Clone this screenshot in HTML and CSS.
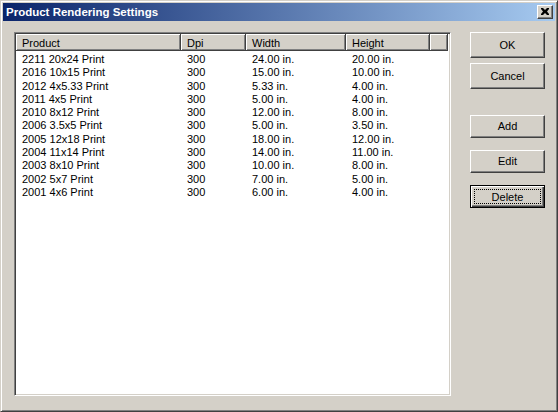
FILE: index.html
```html
<!DOCTYPE html>
<html>
<head>
<meta charset="utf-8">
<link rel="stylesheet" href="styles.css">
</head>
<body>
<div class="window">
  <div class="titlebar">
    <span class="title">Product Rendering Settings</span>
    <span class="close">
      <svg width="8" height="7" viewBox="0 0 8 7"><path d="M0 0h2l2 2 2-2h2v1l-2 2.5 2 2.5v1h-2l-2-2-2 2h-2v-1l2-2.5-2-2.5z" fill="#000"/></svg>
    </span>
  </div>
  <div class="client">
    <div class="listbox">
      <div class="header">
        <div class="hcell">Product</div>
        <div class="hcell">Dpi</div>
        <div class="hcell">Width</div>
        <div class="hcell">Height</div>
        <div class="hcell filler"></div>
      </div>
      <div class="rows">
        <div class="row"><span>2211 20x24 Print</span><span>300</span><span>24.00 in.</span><span>20.00 in.</span></div>
        <div class="row"><span>2016 10x15 Print</span><span>300</span><span>15.00 in.</span><span>10.00 in.</span></div>
        <div class="row"><span>2012 4x5.33 Print</span><span>300</span><span>5.33 in.</span><span>4.00 in.</span></div>
        <div class="row"><span>2011 4x5 Print</span><span>300</span><span>5.00 in.</span><span>4.00 in.</span></div>
        <div class="row"><span>2010 8x12 Print</span><span>300</span><span>12.00 in.</span><span>8.00 in.</span></div>
        <div class="row"><span>2006 3.5x5 Print</span><span>300</span><span>5.00 in.</span><span>3.50 in.</span></div>
        <div class="row"><span>2005 12x18 Print</span><span>300</span><span>18.00 in.</span><span>12.00 in.</span></div>
        <div class="row"><span>2004 11x14 Print</span><span>300</span><span>14.00 in.</span><span>11.00 in.</span></div>
        <div class="row"><span>2003 8x10 Print</span><span>300</span><span>10.00 in.</span><span>8.00 in.</span></div>
        <div class="row"><span>2002 5x7 Print</span><span>300</span><span>7.00 in.</span><span>5.00 in.</span></div>
        <div class="row"><span>2001 4x6 Print</span><span>300</span><span>6.00 in.</span><span>4.00 in.</span></div>
      </div>
    </div>
    <div class="buttons">
      <div class="btn tall">OK</div>
      <div class="btn tall cancel">Cancel</div>
      <div class="btn add">Add</div>
      <div class="btn edit">Edit</div>
      <div class="btn default delete"><span class="focus">Delete</span></div>
    </div>
  </div>
</div>
</body>
</html>
```
FILE: styles.css
```css
html, body {
  margin: 0;
  padding: 0;
  background: #d4d0c8;
}
body {
  font-family: "Liberation Sans", Arial, sans-serif;
  font-size: 11px;
  color: #000;
}
.window {
  box-sizing: border-box;
  width: 558px;
  height: 412px;
  background: #d4d0c8;
  border: 1px solid;
  border-color: #d4d0c8 #404040 #404040 #d4d0c8;
  box-shadow: inset 1px 1px #fff, inset -1px -1px #808080;
  padding: 2px;
}
.titlebar {
  box-sizing: border-box;
  height: 18px;
  background: linear-gradient(to right, #0a246a, #a6caf0);
  display: flex;
  align-items: center;
  justify-content: space-between;
  padding: 0 2px 0 3px;
}
.title {
  color: #fff;
  font-weight: bold;
  font-size: 11.5px;
}
.close {
  box-sizing: border-box;
  width: 16px;
  height: 14px;
  background: #d4d0c8;
  border: 1px solid;
  border-color: #fff #404040 #404040 #fff;
  box-shadow: inset -1px -1px #808080;
  display: flex;
  align-items: center;
  justify-content: center;
  padding: 0 1px 1px 0;
}
.close svg { display: block; }
.client {
  display: flex;
  align-items: flex-start;
  padding: 11px 0 0 11px;
  gap: 19px;
}
.listbox {
  box-sizing: border-box;
  flex: none;
  width: 437px;
  height: 364px;
  overflow: hidden;
  background: #fff;
  border: 1px solid;
  border-color: #808080 #fff #fff #808080;
  box-shadow: inset 1px 1px #404040, inset -1px -1px #d4d0c8;
  padding: 1px;
}
.header {
  display: flex;
  height: 17px;
}
.hcell {
  box-sizing: border-box;
  height: 17px;
  background: #d4d0c8;
  border-right: 1px solid #404040;
  border-bottom: 1px solid #404040;
  box-shadow: inset 1px 1px #fff, inset -1px -1px #808080;
  padding: 2px 0 0 6px;
  line-height: 14px;
}
.hcell:nth-child(1) { width: 165px; }
.hcell:nth-child(2) { width: 65px; }
.hcell:nth-child(3) { width: 100px; }
.hcell:nth-child(4) { width: 84px; }
.hcell.filler { width: 18px; }
.rows {
  display: flex;
  flex-direction: column;
  padding-top: 2px;
}
.row {
  display: grid;
  grid-template-columns: 165px 65px 100px 84px;
  height: 13.3px;
  line-height: 13.3px;
}
.row span {
  padding-left: 6px;
  white-space: nowrap;
}
.buttons {
  display: flex;
  flex-direction: column;
  width: 75px;
}
.btn {
  box-sizing: border-box;
  width: 75px;
  height: 23px;
  border: 1px solid;
  border-color: #fff #404040 #404040 #fff;
  box-shadow: inset -1px -1px #808080;
  display: flex;
  align-items: center;
  justify-content: center;
  padding-bottom: 1px;
}
.btn.tall { height: 26px; }
.btn.cancel { margin-top: 5px; }
.btn.add { margin-top: 26px; }
.btn.edit { margin-top: 12px; }
.btn.delete { margin-top: 12px; }
.btn.default {
  border: 1px solid #000;
  box-shadow: inset 1px 1px #fff, inset -1px -1px #404040, inset -2px -2px #808080;
  padding: 3px;
}
.focus {
  box-sizing: border-box;
  flex: 1;
  align-self: stretch;
  border: 1px dotted #000;
  display: flex;
  align-items: center;
  justify-content: center;
}
```
